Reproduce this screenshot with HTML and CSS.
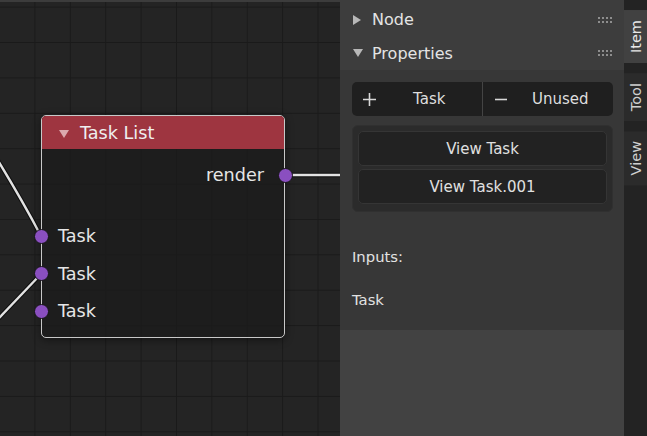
FILE: index.html
```html
<!DOCTYPE html>
<html>
<head>
<meta charset="utf-8">
<link rel="stylesheet" href="styles.css">
</head>
<body>
<div class="app">
  <div class="canvas">
    <div class="canvas-top"></div>
    <svg class="links" width="340" height="436" viewBox="0 0 340 436">
      <g class="link-outline">
        <path d="M -3 159 Q 22 200, 41 236"/>
        <path d="M -2 319 L 41 274"/>
        <path d="M 285 175 L 340 175"/>
      </g>
      <g class="link">
        <path d="M -3 159 Q 22 200, 41 236"/>
        <path d="M -2 319 L 41 274"/>
        <path d="M 285 175 L 340 175"/>
      </g>
    </svg>
    <div class="node">
      <div class="node-header">
        <svg class="node-tri" width="10" height="8" viewBox="0 0 10 8"><polygon points="0,0 10,0 5,8"/></svg>
        <span>Task List</span>
      </div>
      <div class="node-body">
        <div class="row out">render<span class="socket"></span></div>
        <div class="row in first"><span class="socket"></span>Task</div>
        <div class="row in"><span class="socket"></span>Task</div>
        <div class="row in"><span class="socket"></span>Task</div>
      </div>
    </div>
  </div>
  <div class="sidebar">
    <div class="panel-area">
      <div class="phead top">
        <svg class="ptri" width="9" height="10" viewBox="0 0 9 10"><polygon points="0,0 8,5 0,10"/></svg>
        <span class="ptitle">Node</span>
        <svg class="grip" width="15" height="6" viewBox="0 0 15 6"><g><rect x="0" y="0" width="2" height="2"/><rect x="4" y="0" width="2" height="2"/><rect x="8" y="0" width="2" height="2"/><rect x="12" y="0" width="2" height="2"/><rect x="0" y="4" width="2" height="2"/><rect x="4" y="4" width="2" height="2"/><rect x="8" y="4" width="2" height="2"/><rect x="12" y="4" width="2" height="2"/></g></svg>
      </div>
      <div class="phead">
        <svg class="ptri" width="10" height="9" viewBox="0 0 10 9"><polygon points="0,0 10,0 5,8"/></svg>
        <span class="ptitle">Properties</span>
        <svg class="grip" width="15" height="6" viewBox="0 0 15 6"><g><rect x="0" y="0" width="2" height="2"/><rect x="4" y="0" width="2" height="2"/><rect x="8" y="0" width="2" height="2"/><rect x="12" y="0" width="2" height="2"/><rect x="0" y="4" width="2" height="2"/><rect x="4" y="4" width="2" height="2"/><rect x="8" y="4" width="2" height="2"/><rect x="12" y="4" width="2" height="2"/></g></svg>
      </div>
      <div class="pbody">
        <div class="btnrow">
          <div class="half plus">
            <svg class="icon" width="15" height="15" viewBox="0 0 15 15"><path d="M7.5 1 V14 M1 7.5 H14"/></svg>
            <span class="btxt">Task</span>
          </div>
          <div class="divider"></div>
          <div class="half minus">
            <svg class="icon" width="14" height="15" viewBox="0 0 14 15"><path d="M1 7.5 H13"/></svg>
            <span class="btxt">Unused</span>
          </div>
        </div>
        <div class="box">
          <div class="vbtn">View Task</div>
          <div class="vbtn">View Task.001</div>
        </div>
        <div class="label first">Inputs:</div>
        <div class="label">Task</div>
      </div>
    </div>
    <div class="tabs">
      <div class="tab active">Item</div>
      <div class="tab">Tool</div>
      <div class="tab">View</div>
    </div>
  </div>
</div>
</body>
</html>
```

FILE: styles.css
```css
* { box-sizing: border-box; }

body {
  margin: 0;
  width: 647px;
  height: 436px;
  overflow: hidden;
  font-family: "DejaVu Sans", "Liberation Sans", sans-serif;
  background: #242424;
}

.app {
  display: flex;
  height: 436px;
}

/* ---------- node canvas ---------- */
.canvas {
  position: relative;
  width: 340px;
  flex: none;
  overflow: hidden;
  background-color: #242424;
  background-image:
    linear-gradient(to right, transparent 34.4px, #1a1a1a 34.4px),
    linear-gradient(to bottom, transparent 34.4px, #1a1a1a 34.4px);
  background-size: 35.4px 35.4px;
  background-position: 0 7.6px;
}

.canvas-top {
  height: 2px;
  background: #3c3c3c;
}

.links {
  position: absolute;
  left: 0;
  top: 0;
}

.links path { fill: none; }

.link-outline path {
  stroke: rgba(0, 0, 0, 0.6);
  stroke-width: 4.5;
}

.link path {
  stroke: #e2e2e2;
  stroke-width: 2.4;
}

.node {
  position: absolute;
  left: 41px;
  top: 115px;
  width: 244px;
  border: 1px solid #c8c8c8;
  border-radius: 5px;
  background: rgba(27, 27, 27, 0.78);
  box-shadow: 0 2px 8px rgba(0, 0, 0, 0.45);
  color: #e6e6e6;
  font-size: 17.6px;
}

.node-header {
  height: 33px;
  display: flex;
  align-items: center;
  padding-left: 17px;
  background: #9e3540;
  border-radius: 4px 4px 0 0;
  color: #efefef;
}

.node-tri {
  margin-right: 11px;
  margin-top: 3px;
}

.node-tri polygon { fill: #dba9ae; }

.node-body {
  padding: 8px 0 7px;
}

.row {
  position: relative;
  display: flex;
  align-items: center;
  height: 37.5px;
}

.row.out {
  height: 36px;
  justify-content: flex-end;
  padding-right: 20px;
}

.row.in { padding-left: 16px; }

.row.in.first { margin-top: 24.5px; }

.socket {
  position: absolute;
  top: calc(50% - 7.5px);
  width: 15px;
  height: 15px;
  border-radius: 50%;
  background: #8a4fc0;
  border: 1px solid #151515;
}

.row.out .socket { right: -8.5px; }
.row.in .socket { left: -8.5px; }

/* ---------- sidebar ---------- */
.sidebar {
  flex: 1;
  display: flex;
}

.panel-area {
  width: 284px;
  flex: none;
  display: flex;
  flex-direction: column;
  background: #424242;
  color: #e4e4e4;
}

.phead {
  height: 34px;
  display: flex;
  align-items: center;
  padding-left: 13px;
  padding-right: 11px;
  background: #3d3d3d;
  font-size: 16px;
}

.phead.top {
  height: 36px;
  padding-top: 3px;
}

.ptri { flex: none; }
.ptri polygon { fill: #b8b8b8; }

.ptitle {
  flex: 1;
  margin-left: 10px;
}

.phead:not(.top) .ptitle { margin-left: 9px; }

.grip rect { fill: #8e8e8e; }

.pbody {
  height: 260px;
  background: #373737;
  padding: 12px 11px 0 12px;
}

.btnrow {
  height: 34px;
  display: flex;
  background: #1f1f1f;
  border-radius: 5px;
  font-size: 15px;
  color: #dedede;
}

.half {
  flex: 1;
  display: flex;
  align-items: center;
}

.half.plus { padding-left: 10px; }
.half.minus { padding-left: 11px; }

.icon { flex: none; }
.icon path {
  stroke: #d8d8d8;
  stroke-width: 1.6;
  fill: none;
}

.btxt {
  flex: 1;
  text-align: center;
}

.divider {
  width: 1px;
  background: #444444;
}

.box {
  margin-top: 9px;
  background: #2b2b2b;
  border: 1px solid #303030;
  border-radius: 6px;
  padding: 5px 5px 7px 5px;
  display: flex;
  flex-direction: column;
  gap: 3px;
}

.vbtn {
  height: 35px;
  display: flex;
  align-items: center;
  justify-content: center;
  background: #222222;
  border: 1px solid #353535;
  border-radius: 5px;
  font-size: 15px;
  color: #e0e0e0;
}

.label {
  height: 20px;
  line-height: 20px;
  font-size: 14.8px;
  color: #e2e2e2;
  margin-top: 23px;
}

.label.first { margin-top: 35px; }

/* ---------- tabs ---------- */
.tabs {
  flex: 1;
  background: #232323;
  padding-top: 10px;
  display: flex;
  flex-direction: column;
  gap: 10px;
}

.tab {
  writing-mode: vertical-rl;
  transform: rotate(180deg);
  display: flex;
  align-items: center;
  justify-content: center;
  padding: 10px 0;
  background: #2b2b2b;
  font-size: 14.5px;
  color: #cfcfcf;
}

.tab.active {
  background: #414141;
  color: #e8e8e8;
}
```
